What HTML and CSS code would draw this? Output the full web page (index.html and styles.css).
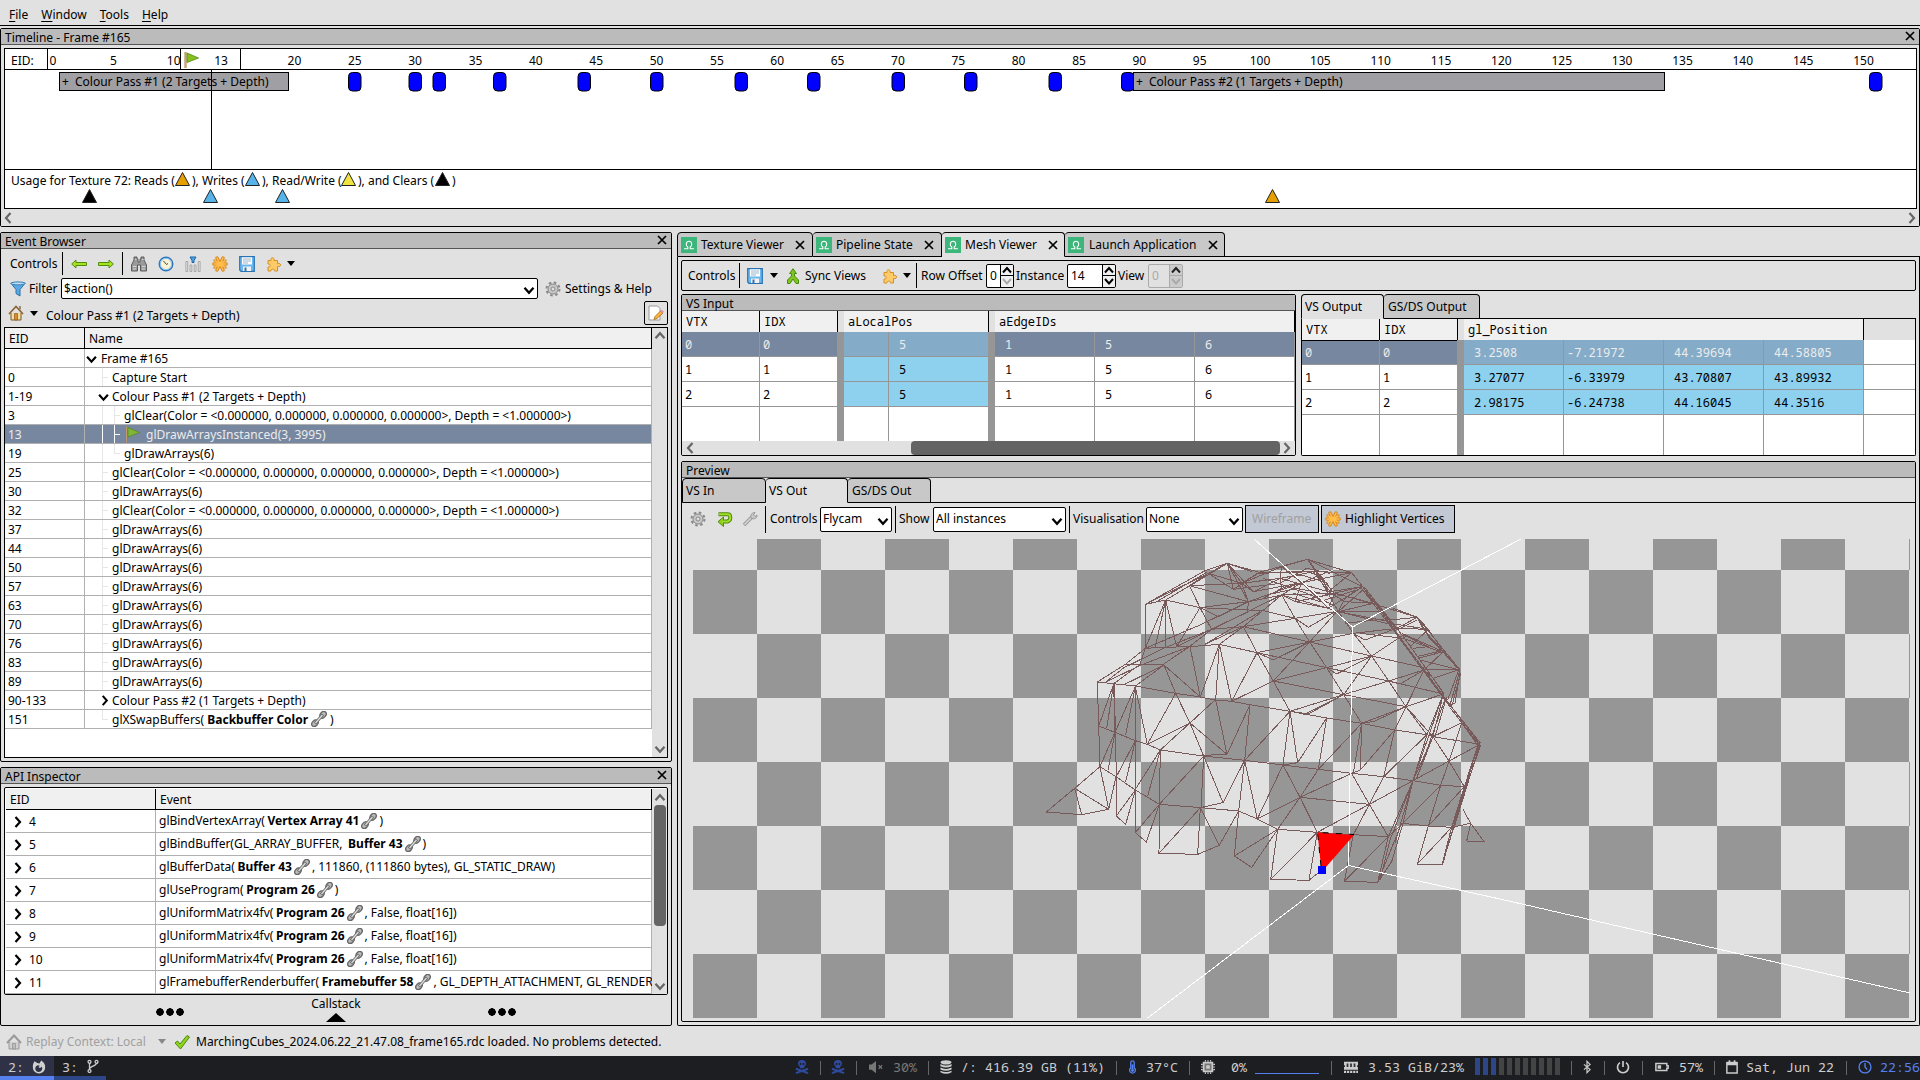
FILE: index.html
```html
<!DOCTYPE html>
<html lang="en">
<head>
<meta charset="utf-8">
<title>RenderDoc</title>
<link rel="stylesheet" href="styles.css">
</head>
<body>
<svg class="defs" width="0" height="0" aria-hidden="true">
  <symbol id="chev-d" viewBox="0 0 10 8"><path d="M1 1.5 5 6 9 1.5" fill="none" stroke="currentColor" stroke-width="2"/></symbol>
  <symbol id="chev-u" viewBox="0 0 10 8"><path d="M1 6.5 5 2 9 6.5" fill="none" stroke="currentColor" stroke-width="2"/></symbol>
  <symbol id="chev-r" viewBox="0 0 8 12"><path d="M1.5 1 6 6 1.5 11" fill="none" stroke="currentColor" stroke-width="2.2"/></symbol>
  <symbol id="chev-l" viewBox="0 0 8 12"><path d="M6.500 1 2 6 6.500 11" fill="none" stroke="currentColor" stroke-width="2.2"/></symbol>
  <symbol id="x" viewBox="0 0 10 10"><path d="M1 1 9 9M9 1 1 9" fill="none" stroke="#000" stroke-width="1.7"/></symbol>
  <symbol id="left" viewBox="0 0 16 16"><path d="M.7 8 5 4V6.500H15.500V9.500H5V12Z" fill="#a8e020" stroke="#4f8f0a"/></symbol>
  <symbol id="right" viewBox="0 0 16 16"><path d="M15.300 8 11 4V6.500H.5V9.500H11V12Z" fill="#a8e020" stroke="#4f8f0a"/></symbol>
  <symbol id="find" viewBox="0 0 16 16"><path d="M3 1h3v2h1v3h2V3h1V1h3v3l2.500 5v6H9.500V9h-3v6H.5V9L3 4Z" fill="#9a9a9a" stroke="#5c5c5c"/><path d="M2 10.500h3.500M11 10.500h3.500M4 3.500h1.500M11 3.500h1.500M2 13h3M11 13h3" stroke="#d8d8d8"/></symbol>
  <symbol id="time" viewBox="0 0 16 16"><circle cx="8" cy="8" r="6.800" fill="#f8f3d4" stroke="#2f76c0" stroke-width="1.400"/><circle cx="8" cy="8" r="5.600" fill="none" stroke="#8cc0ee"/><path d="M5.500 5 8.500 8.500 10 7.500" fill="none" stroke="#444"/></symbol>
  <symbol id="stats" viewBox="0 0 16 16"><path d="M.9 15.500V5.500h1.800v10ZM5 15.500V9h1.800v6.500ZM9.200 15.500V9H11v6.500ZM13.300 15.500V5.500h1.800v10Z" fill="#e8e8e8" stroke="#999" stroke-width=".8"/><path d="M5 1h6L9 4.500V6.500H7V4.500Z" fill="#4aa3e8" stroke="#1e66a8"/></symbol>
  <symbol id="star" viewBox="0 0 16 16"><g stroke-linecap="round"><path d="M5 2 11 14M11 2 5 14M1.800 8H14.200" stroke="#d98a22" stroke-width="3.400"/><path d="M2.500 4.500 13.500 11.500M13.500 4.500 2.500 11.500" stroke="#d98a22" stroke-width="2.400"/><path d="M5 2 11 14M11 2 5 14M2 8H14M3 5 13 11M13 5 3 11" stroke="#ffbe4c" stroke-width="1.500"/></g></symbol>
  <symbol id="save" viewBox="0 0 16 16"><path d="M.7.700H15.300V15.300H2L.7 14Z" fill="#6bb8ee" stroke="#2a72b4" stroke-width="1.200"/><path d="M3 1.300H13V8.500H3Z" fill="#fff"/><path d="M4 3H12M4 5H12M4 7H9" stroke="#9bb4c8"/><path d="M4 10.500H12V15H4Z" fill="#f2f2f2"/><path d="M5.500 11.500H7.500V15H5.500Z" fill="#3673aa"/></symbol>
  <symbol id="puzzle" viewBox="0 0 16 16"><path d="M2 4.500H5C4 .8 9 .8 8 4.500H11.500V7.500C15.700 6.500 15.700 11.500 11.500 10.500V15H8.500C9 12.500 4.500 12.500 5 15H2V11C5 11.500 5 7.500 2 8Z" fill="#ffcb68" stroke="#d49028"/></symbol>
  <symbol id="funnel" viewBox="0 0 16 16"><path d="M.8 2 6 8.500V12.500L10 15V8.500L15.200 2Z" fill="#5aa9e4" stroke="#2b6fa8"/><ellipse cx="8" cy="2.400" rx="7" ry="1.500" fill="#b8dcf5" stroke="#3c7fb5"/></symbol>
  <symbol id="gear" viewBox="0 0 16 16"><circle cx="8" cy="8" r="6.500" fill="none" stroke="#8a8a8a" stroke-width="2" stroke-dasharray="2.600 2.500"/><circle cx="8" cy="8" r="5" fill="#c8c8c8" stroke="#8a8a8a"/><circle cx="8" cy="8" r="2" fill="#e0e0e0" stroke="#8a8a8a"/></symbol>
  <symbol id="house" viewBox="0 0 16 16"><path d="M3 8V15H13V8" fill="#f4dca0" stroke="#7a5a2a"/><path d="M6.500 15V8.500H9.500V15Z" fill="#d68b2a" stroke="#80501a" stroke-width=".6"/><path d="M1 9 8 1.500 15 9" fill="none" stroke="#8a6234" stroke-width="1.600"/><path d="M12 1V4.500" stroke="#9a8a74" stroke-width="2"/></symbol>
  <symbol id="house-g" viewBox="0 0 16 16"><path d="M3 8V15H13V8" fill="#d0d0d0" stroke="#999"/><path d="M6.500 15V9.500H9.500V15Z" fill="#bbb" stroke="#888" stroke-width=".6"/><path d="M1 9 8 1.500 15 9" fill="none" stroke="#999" stroke-width="2"/></symbol>
  <symbol id="edit" viewBox="0 0 16 16"><path d="M1 1H9.500L12 3.500V15H1Z" fill="#fff" stroke="#999"/><path d="M6 14.500 7 11.500 12.500 6 15 8 9 13.500Z" fill="#ffb13b" stroke="#a56a1a" stroke-width=".8"/><path d="M12.500 6 14 4.700 15.700 6.500 15 8Z" fill="#e08ac8"/></symbol>
  <symbol id="flag" viewBox="0 0 16 16"><path d="M2.500 0V16" stroke="#a87838" stroke-width="2"/><path d="M2.500 0V16" stroke="#dcb47c" stroke-width=".7"/><path d="M4 1 15.500 6 4 10.500Z" fill="#86c01c" stroke="#4f8a10" stroke-width=".8"/></symbol>
  <symbol id="link" viewBox="0 0 16 16"><g fill="none" stroke="#666"><ellipse cx="4" cy="12.200" rx="3.700" ry="2.700" transform="rotate(-48 4 12.200)" fill="#bbb" stroke-width="1.300"/><ellipse cx="12" cy="3.800" rx="3.700" ry="2.700" transform="rotate(-48 12 3.800)" fill="#bbb" stroke-width="1.300"/><path d="M4 12.500 12 3.500" stroke-width="3"/><path d="M4.500 12 11.500 4" stroke="#ddd" stroke-width="1.300"/></g></symbol>
  <symbol id="rdoc" viewBox="0 0 16 16"><path d="M0 0H16V16H0Z" fill="#3db67b"/><path d="M3 11.800H6.800V10C4.500 9 4.800 4.200 8 4.200S11.500 9 9.200 10V11.800H13" fill="none" stroke="#fff" stroke-width="1.100"/></symbol>
  <symbol id="sync" viewBox="0 0 16 16"><path d="M8 .7 11.500 5.500H9.500V8L13.500 12V15.500H11L8 11 5 15.500H2.500V12L6.500 8V5.500H4.500Z" fill="#7ec522" stroke="#4a8a0c"/></symbol>
  <symbol id="return" viewBox="0 0 16 16"><path d="M1.500 3.300H10.500Q13.300 3.300 13.300 6.500T10.500 10.500H6" fill="none" stroke="#4f8a0a" stroke-width="4"/><path d="M6.500 6 1 10.700 6.500 15.500Z" fill="#8fd01c" stroke="#4f8a0a"/><path d="M2 3.300H10.500Q13.300 3.300 13.300 6.500T10.500 10.500H5" fill="none" stroke="#a0dc28" stroke-width="2"/></symbol>
  <symbol id="wrench" viewBox="0 0 16 16"><path d="M2 14 10 6" stroke="#999" stroke-width="3.500"/><path d="M2.500 13.500 10 6" stroke="#d5d5d5" stroke-width="1.600"/><path d="M9 7C8 4 10.500 1 13 1.500L11.500 4 13 5.500 15 4C15.500 7 12 9 9 7Z" fill="#c8c8c8" stroke="#999"/></symbol>
  <symbol id="check" viewBox="0 0 16 16"><path d="M1 9 3.500 7 6 10 13 1.500 15.500 3 6.500 15Z" fill="#8fd41c" stroke="#4c8a0a"/></symbol>
  <symbol id="skull" viewBox="0 0 16 16"><path d="M8 0C11.500 0 13 2.500 12.500 5 12.200 6.300 11 7 10.500 7.300V9.300H5.500V7.300C5 7 3.800 6.300 3.500 5 3 2.500 4.500 0 8 0Z" fill="#2f4a9c"/><circle cx="6.300" cy="4.600" r="1.200" fill="#1c1e22"/><circle cx="9.700" cy="4.600" r="1.200" fill="#1c1e22"/><path d="M1 10 15 15M15 10 1 15" stroke="#2f4a9c" stroke-width="2.200"/></symbol>
</svg>

<nav class="menubar"><span><u>F</u>ile</span><span><u>W</u>indow</span><span><u>T</u>ools</span><span><u>H</u>elp</span></nav>

<section class="dock timeline">
  <h2 class="title">Timeline - Frame #165<svg class="close"><use href="#x"/></svg></h2>
  <svg class="track" width="1913" height="161" viewBox="4 48 1913 161">
    <rect x="4.500" y="48.500" width="1912" height="160" fill="#fff" stroke="#000"/>
    <path d="M5 69.500H1916M5 169.500H1916M47.500 49V69M180.500 49V69M240.500 49V69" stroke="#000"/>
    <text x="11" y="65">EID:</text>
    <g class="ticks" transform="translate(53 65)">
      <text x="0">0</text><text x="60.400">5</text><text x="120.700">10</text><text x="168">13</text><text x="241.400">20</text><text x="301.800">25</text><text x="362.100">30</text><text x="422.500">35</text><text x="482.800">40</text><text x="543.200">45</text><text x="603.500">50</text><text x="663.900">55</text><text x="724.200">60</text><text x="784.600">65</text><text x="844.900">70</text><text x="905.300">75</text><text x="965.600">80</text><text x="1026">85</text><text x="1086.300">90</text><text x="1146.700">95</text><text x="1207">100</text><text x="1267.400">105</text><text x="1327.700">110</text><text x="1388.100">115</text><text x="1448.400">120</text><text x="1508.800">125</text><text x="1569.100">130</text><text x="1629.500">135</text><text x="1689.800">140</text><text x="1750.200">145</text><text x="1810.500">150</text>
    </g>
    <use href="#flag" x="183" y="52" width="16" height="16"/>
    <g fill="#0000fe" stroke="#000" stroke-width="1">
      <rect x="348.500" y="72.500" width="12.500" height="18.500" rx="4"/><rect x="409" y="72.500" width="12.500" height="18.500" rx="4"/><rect x="433" y="72.500" width="12.500" height="18.500" rx="4"/><rect x="493.500" y="72.500" width="12.500" height="18.500" rx="4"/><rect x="578" y="72.500" width="12.500" height="18.500" rx="4"/><rect x="650.500" y="72.500" width="12.500" height="18.500" rx="4"/><rect x="735" y="72.500" width="12.500" height="18.500" rx="4"/><rect x="807.500" y="72.500" width="12.500" height="18.500" rx="4"/><rect x="892" y="72.500" width="12.500" height="18.500" rx="4"/><rect x="964.500" y="72.500" width="12.500" height="18.500" rx="4"/><rect x="1049" y="72.500" width="12.500" height="18.500" rx="4"/><rect x="1121.500" y="72.500" width="12.500" height="18.500" rx="4"/><rect x="1869.500" y="72.500" width="12.500" height="18.500" rx="4"/>
    </g>
    <g fill="#a09fa4" stroke="#000"><rect x="59.500" y="72.500" width="229" height="18"/><rect x="1133.500" y="72.500" width="531" height="18"/></g>
    <text x="62" y="86">+</text><text x="75" y="86">Colour Pass #1 (2 Targets + Depth)</text>
    <text x="1136" y="86">+</text><text x="1149" y="86">Colour Pass #2 (1 Targets + Depth)</text>
    <path d="M211.500 70V169" stroke="#000"/>
    <text x="11" y="185">Usage for Texture 72: Reads (</text><text x="192" y="185">), Writes (</text><text x="262" y="185">), Read/Write (</text><text x="358" y="185">), and Clears (</text><text x="452" y="185">)</text>
    <g stroke="#222" stroke-width="1">
      <path d="M175.500 185.500 182.500 172.500 189.500 185.500Z" fill="#e69f00"/><path d="M245.500 185.500 252.500 172.500 259.500 185.500Z" fill="#56b4e9"/><path d="M341.500 185.500 348.500 172.500 355.500 185.500Z" fill="#f0e442"/><path d="M435.500 185.500 442.500 172.500 449.500 185.500Z" fill="#000"/>
      <path d="M82.500 202.500 89.500 189.500 96.500 202.500Z" fill="#000"/><path d="M203.500 202.500 210.500 189.500 217.500 202.500Z" fill="#56b4e9"/><path d="M275.500 202.500 282.500 189.500 289.500 202.500Z" fill="#56b4e9"/><path d="M1265.500 202.500 1272.500 189.500 1279.500 202.500Z" fill="#e69f00"/>
    </g>
  </svg>
  <div class="hscroll"><svg class="cv"><use href="#chev-l"/></svg><svg class="cv"><use href="#chev-r"/></svg></div>
</section>

<main>
  <div class="leftcol">
    <section class="dock events">
      <h2 class="title">Event Browser<svg class="close"><use href="#x"/></svg></h2>
      <div class="tools evtools"><span>Controls</span><i class="sep"></i><svg class="ic"><use href="#left"/></svg><svg class="ic"><use href="#right"/></svg><i class="sep"></i><svg class="ic"><use href="#find"/></svg><svg class="ic"><use href="#time"/></svg><svg class="ic"><use href="#stats"/></svg><svg class="ic"><use href="#star"/></svg><svg class="ic"><use href="#save"/></svg><svg class="ic"><use href="#puzzle"/></svg><i class="dd"></i></div>
      <div class="filter"><svg class="ic"><use href="#funnel"/></svg><span class="flabel">Filter</span><div class="combo fcombo"><span>$action()</span><svg class="cd"><use href="#chev-d"/></svg></div><svg class="ic"><use href="#gear"/></svg><span>Settings &amp; Help</span></div>
      <div class="crumb"><svg class="ic"><use href="#house"/></svg><i class="dd"></i><span>Colour Pass #1 (2 Targets + Depth)</span><button class="editbtn"><svg class="ic"><use href="#edit"/></svg></button></div>
      <div class="frame evframe">
        <div class="evtable">
          <div class="ehead"><b>EID</b><b>Name</b></div>
          <div class="erow"><span></span><span class="l0"><svg class="tw"><use href="#chev-d"/></svg>Frame #165</span></div>
          <div class="erow"><span>0</span><span class="l1 leaf">Capture Start</span></div>
          <div class="erow"><span>1-19</span><span class="l1"><svg class="tw"><use href="#chev-d"/></svg>Colour Pass #1 (2 Targets + Depth)</span></div>
          <div class="erow"><span>3</span><span class="l2 leaf">glClear(Color = &lt;0.000000, 0.000000, 0.000000, 0.000000&gt;, Depth = &lt;1.000000&gt;)</span></div>
          <div class="erow sel"><span>13</span><span class="l2 leaf"><svg class="flag"><use href="#flag"/></svg>glDrawArraysInstanced(3, 3995)</span></div>
          <div class="erow"><span>19</span><span class="l2 leaf last">glDrawArrays(6)</span></div>
          <div class="erow"><span>25</span><span class="l1 leaf">glClear(Color = &lt;0.000000, 0.000000, 0.000000, 0.000000&gt;, Depth = &lt;1.000000&gt;)</span></div>
          <div class="erow"><span>30</span><span class="l1 leaf">glDrawArrays(6)</span></div>
          <div class="erow"><span>32</span><span class="l1 leaf">glClear(Color = &lt;0.000000, 0.000000, 0.000000, 0.000000&gt;, Depth = &lt;1.000000&gt;)</span></div>
          <div class="erow"><span>37</span><span class="l1 leaf">glDrawArrays(6)</span></div>
          <div class="erow"><span>44</span><span class="l1 leaf">glDrawArrays(6)</span></div>
          <div class="erow"><span>50</span><span class="l1 leaf">glDrawArrays(6)</span></div>
          <div class="erow"><span>57</span><span class="l1 leaf">glDrawArrays(6)</span></div>
          <div class="erow"><span>63</span><span class="l1 leaf">glDrawArrays(6)</span></div>
          <div class="erow"><span>70</span><span class="l1 leaf">glDrawArrays(6)</span></div>
          <div class="erow"><span>76</span><span class="l1 leaf">glDrawArrays(6)</span></div>
          <div class="erow"><span>83</span><span class="l1 leaf">glDrawArrays(6)</span></div>
          <div class="erow"><span>89</span><span class="l1 leaf">glDrawArrays(6)</span></div>
          <div class="erow"><span>90-133</span><span class="l1"><svg class="twr"><use href="#chev-r"/></svg>Colour Pass #2 (1 Targets + Depth)</span></div>
          <div class="erow"><span>151</span><span class="l1 leaf last">glXSwapBuffers(&nbsp;<b>Backbuffer Color</b><svg class="lk"><use href="#link"/></svg>)</span></div>
        </div>
        <div class="vscroll"><svg class="cd"><use href="#chev-u"/></svg><svg class="cd"><use href="#chev-d"/></svg></div>
      </div>
    </section>
    <section class="dock api">
      <h2 class="title">API Inspector<svg class="close"><use href="#x"/></svg></h2>
      <div class="frame apiframe">
        <div class="apitable">
          <div class="ahead"><b>EID</b><b>Event</b></div>
          <div class="arow"><span><svg><use href="#chev-r"/></svg>4</span><span>glBindVertexArray(&nbsp;<b>Vertex Array 41</b><svg class="lk"><use href="#link"/></svg>)</span></div>
          <div class="arow"><span><svg><use href="#chev-r"/></svg>5</span><span>glBindBuffer(GL_ARRAY_BUFFER, &nbsp;<b>Buffer 43</b><svg class="lk"><use href="#link"/></svg>)</span></div>
          <div class="arow"><span><svg><use href="#chev-r"/></svg>6</span><span>glBufferData(&nbsp;<b>Buffer 43</b><svg class="lk"><use href="#link"/></svg>, 111860, (111860 bytes), GL_STATIC_DRAW)</span></div>
          <div class="arow"><span><svg><use href="#chev-r"/></svg>7</span><span>glUseProgram(&nbsp;<b>Program 26</b><svg class="lk"><use href="#link"/></svg>)</span></div>
          <div class="arow"><span><svg><use href="#chev-r"/></svg>8</span><span>glUniformMatrix4fv(&nbsp;<b>Program 26</b><svg class="lk"><use href="#link"/></svg>, False, float[16])</span></div>
          <div class="arow"><span><svg><use href="#chev-r"/></svg>9</span><span>glUniformMatrix4fv(&nbsp;<b>Program 26</b><svg class="lk"><use href="#link"/></svg>, False, float[16])</span></div>
          <div class="arow"><span><svg><use href="#chev-r"/></svg>10</span><span>glUniformMatrix4fv(&nbsp;<b>Program 26</b><svg class="lk"><use href="#link"/></svg>, False, float[16])</span></div>
          <div class="arow"><span><svg><use href="#chev-r"/></svg>11</span><span>glFramebufferRenderbuffer(&nbsp;<b>Framebuffer 58</b><svg class="lk"><use href="#link"/></svg>, GL_DEPTH_ATTACHMENT, GL_RENDER</span></div>
        </div>
        <div class="vscroll"><svg class="cd"><use href="#chev-u"/></svg><i class="thumb"></i><svg class="cd"><use href="#chev-d"/></svg></div>
      </div>
      <div class="callstack"><i class="dots"></i><div><span>Callstack</span><i class="up"></i></div><i class="dots"></i></div>
    </section>
  </div>

  <div class="rightcol">
    <div class="tabs maintabs">
      <div class="tab t1"><svg class="ic"><use href="#rdoc"/></svg><span>Texture Viewer</span><svg class="tx"><use href="#x"/></svg></div>
      <div class="tab t2"><svg class="ic"><use href="#rdoc"/></svg><span>Pipeline State</span><svg class="tx"><use href="#x"/></svg></div>
      <div class="tab t3 on"><svg class="ic"><use href="#rdoc"/></svg><span>Mesh Viewer</span><svg class="tx"><use href="#x"/></svg></div>
      <div class="tab t4"><svg class="ic"><use href="#rdoc"/></svg><span>Launch Application</span><svg class="tx"><use href="#x"/></svg></div>
      <div class="fill"></div>
    </div>
    <div class="mesh">
      <div class="frame tools meshtools"><span class="w1">Controls</span><i class="sep"></i><svg class="ic m1"><use href="#save"/></svg><i class="dd m2"></i><svg class="ic m3"><use href="#sync"/></svg><span class="m4">Sync Views</span><svg class="ic"><use href="#puzzle"/></svg><i class="dd m5"></i><i class="sep m6"></i><span class="m7">Row Offset</span>
        <div class="spin s1"><span>0</span><div><svg><use href="#chev-u"/></svg><svg class="dim"><use href="#chev-d"/></svg></div></div><span class="m8">Instance</span>
        <div class="spin s2"><span>14</span><div><svg><use href="#chev-u"/></svg><svg><use href="#chev-d"/></svg></div></div><span class="m9">View</span>
        <div class="spin s3"><span>0</span><div><svg><use href="#chev-u"/></svg><svg class="dim"><use href="#chev-d"/></svg></div></div>
      </div>
      <div class="split">
        <section class="dock vsin">
          <h2 class="title">VS Input</h2>
          <div class="g gin head"><b>VTX</b><b>IDX</b><i></i><b class="span2">aLocalPos</b><i></i><b class="span3">aEdgeIDs</b></div>
          <div class="g gin sel"><span>0</span><span>0</span><i></i><span class="c"></span><span class="c n">5</span><i></i><span class="n">1</span><span class="n">5</span><span class="n">6</span></div>
          <div class="g gin"><span>1</span><span>1</span><i></i><span class="c"></span><span class="c n">5</span><i></i><span class="n">1</span><span class="n">5</span><span class="n">6</span></div>
          <div class="g gin"><span>2</span><span>2</span><i></i><span class="c"></span><span class="c n">5</span><i></i><span class="n">1</span><span class="n">5</span><span class="n">6</span></div>
          <div class="g gin rest"><span></span><span></span><i></i><span></span><span></span><i></i><span></span><span></span><span></span></div>
          <div class="hscroll"><svg class="cv"><use href="#chev-l"/></svg><i class="thumb"></i><svg class="cv"><use href="#chev-r"/></svg></div>
        </section>
        <section class="vsout">
          <div class="tabs"><div class="tab o1 on">VS Output</div><div class="tab o2">GS/DS Output</div><div class="fill"></div></div>
          <div class="body">
            <div class="g gout head"><b>VTX</b><b>IDX</b><i></i><b class="span4">gl_Position</b><em></em></div>
            <div class="g gout sel"><span>0</span><span>0</span><i></i><span class="c p">3.2508</span><span class="c">-7.21972</span><span class="c p">44.39694</span><span class="c p">44.58805</span><em></em></div>
            <div class="g gout"><span>1</span><span>1</span><i></i><span class="c p">3.27077</span><span class="c">-6.33979</span><span class="c p">43.70807</span><span class="c p">43.89932</span><em></em></div>
            <div class="g gout"><span>2</span><span>2</span><i></i><span class="c p">2.98175</span><span class="c">-6.24738</span><span class="c p">44.16045</span><span class="c p">44.3516</span><em></em></div>
            <div class="g gout rest"><span></span><span></span><i></i><span></span><span></span><span></span><span></span><em></em></div>
          </div>
        </section>
      </div>
      <section class="dock preview">
        <h2 class="title">Preview</h2>
        <div class="tabs"><div class="tab p1">VS In</div><div class="tab p2 on">VS Out</div><div class="tab p3">GS/DS Out</div><div class="fill"></div></div>
        <div class="tools ptools"><svg class="ic"><use href="#gear"/></svg><svg class="ic q1"><use href="#return"/></svg><svg class="ic q2"><use href="#wrench"/></svg><i class="sep"></i><span class="q3">Controls</span><div class="combo k1"><span>Flycam</span><svg class="cd"><use href="#chev-d"/></svg></div><i class="sep"></i><span class="q4">Show</span><div class="combo k2"><span>All instances</span><svg class="cd"><use href="#chev-d"/></svg></div><i class="sep"></i><span class="q5">Visualisation</span><div class="combo k3"><span>None</span><svg class="cd"><use href="#chev-d"/></svg></div><div class="btn off b1">Wireframe</div><div class="btn b2"><svg class="ic"><use href="#star"/></svg>Highlight Vertices</div></div>
        <svg class="canvas" width="1217" height="479" viewBox="693 539 1217 479">
          <defs><pattern id="chk" x="693" y="506" width="128" height="128" patternUnits="userSpaceOnUse"><rect width="128" height="128" fill="#e1e1e1"/><path d="M64 0h64v64H64ZM0 64h64v64H0Z" fill="#969696"/></pattern></defs>
          <rect x="693" y="539" width="1217" height="479" fill="url(#chk)"/>
          <g class="wire" transform="translate(1020 540) scale(.33333)">
            <path d="M79,816 164,745 240,680M79,816 185,824 266,808M164,745 185,824M164,745 266,808M240,680 266,808M232,428 240,680 288,710 346,750 418,793M236,558 285,577 346,602 382,613 421,630M232,426 346,438 467,460 541,471 585,480 635,484 690,494 810,514 920,534 1025,550 1124,570 1221,584 1239,590 1380,613"/>
            <path d="M232,426 316,373 376,325M258,425 312,383 430,325M260,425 363,375 508,320M280,432 360,373 376,325M316,432 432,375 346,438M316,373 430,373 508,320M376,325 430,322 508,320 598,313 711,338M283,432 289,710 289,828 317,853 346,750M281,432 236,558M281,432 260,565M281,432 285,577M346,440 285,577M346,440 317,585M346,440 346,878 379,906 418,793M346,440 382,613M346,750 289,828M285,577 240,680M285,577 264,690M288,710 266,808M346,602 289,710M346,602 317,725M421,630 346,748M421,630 383,768M418,793 346,878M421,630 418,793 417,940 533,943 598,916 656,813M541,803 533,943M541,803 598,916M417,940 541,803"/>
            <path d="M467,460 382,613M432,375 467,460 510,549 621,643M432,375 541,471M510,320 541,471M382,613 510,549 585,480M421,630 510,549 551,648M598,313 541,471M598,313 587,480M598,313 635,484M711,338 635,484M711,338 760,423 810,514M635,484 760,423 869,306M587,480 621,643M690,494 621,643M690,494 674,661M810,514 674,661M810,514 789,675M810,514 833,668M920,534 833,668M920,534 895,688M1025,550 895,688M1025,550 1000,700M1025,550 1021,690M1124,570 1021,690M1124,570 1091,710M1221,584 1091,710M1221,584 1179,722M1239,590 1179,722M1239,590 1190,715"/>
            <path d="M421,630 551,648 674,661 789,675 895,688 995,700 1091,710 1179,722 1262,736 1333,740M551,646 621,643M789,675 833,668M995,700 1021,690M551,648 543,803M551,648 418,793M551,648 609,788M674,661 609,788M674,661 656,813M674,661 712,837M789,675 712,837M789,675 840,772M895,688 840,772M995,700 840,772M995,700 1048,793M1091,710 1048,793M1179,722 1048,793M1179,722 1149,850M1262,736 1149,850M1262,736 1225,858M1333,740 1225,858M1333,740 1295,862M1333,740 1287,663 1239,590M1262,736 1287,663 1325,548M1287,663 1179,722M1287,663 1380,613M1239,590 1325,548"/>
            <path d="M418,793 543,803 656,813M541,803 609,788M656,813 712,837 773,868 892,877 1000,884 1105,890M840,772 712,837M840,772 773,868M840,772 892,877M840,772 1048,793M1048,793 892,877M1048,793 1000,884M1048,793 1105,890 1179,722M1105,890 1149,850M656,813 643,948 695,982 773,868M643,948 773,868 752,1018 867,1021 892,877M752,1018 892,877M867,1021 905,990M1000,884 973,1024 1073,1027 1145,850M973,1024 1105,890 1073,1027M1149,850 1225,858 1295,862 1352,850 1393,906 1340,903 1352,850M1225,858 1192,972 1266,975M1192,972 1295,862 1266,975M1328,806 1352,850M1179,722 1110,900 1080,1020M1270,462 1179,722 1125,910M1149,850 1115,965 1073,1027"/>
            <path d="M1380,613 1266,975M1376,613 1290,880 1270,970M1378,618 1300,870M1382,615 1318,800 1286,910M1372,620 1330,750M1374,616 1296,880M1290,495 1380,613M1292,505 1376,613M1298,505 1382,610M1325,548 1376,620M1028,140 1290,495M1032,140 1150,290 1270,458M1025,145 1120,270 1290,500M1040,150 1110,245M1060,180 1130,270"/>
            <path d="M1270,462 1239,590M1270,462 1221,584M1276,475 1190,715M1280,470 1245,590M1320,390 1290,495M1320,400 1305,490 1290,495M1318,385 1283,480M1322,400 1295,500M711,338 760,360 869,306M711,338 920,383 1106,423 1270,462M869,306 920,383 971,464 1025,550M760,423 920,383M760,423 971,464 1158,500 1239,590M920,383 1055,348 1220,385M869,306 1055,348 1106,423 1158,500 1221,584M810,514 971,464 1106,423M850,524 971,464M810,514 865,522 971,464M1025,550 1158,500M1030,548 1060,545 1158,500M1158,500 1270,462M1158,500 1124,570M1055,348 971,464M1055,348 1000,280M1055,348 1150,285M920,383 950,402 1055,348M1106,423 1212,390M1106,423 1140,432 1212,390 1158,500M1212,390 1270,335M1240,415 1320,388M1212,390 1240,415 1270,462M1195,355 1270,335M711,338 869,306"/>
            <path d="M869,306 825,235 670,260 711,338M670,260 575,268 540,203M575,268 470,320M540,203 470,320M540,203 508,137M540,203 685,185M508,137 685,185M508,137 665,130M540,203 595,230 685,185M825,235 945,215M825,235 865,262 945,215M825,235 785,165 670,260M869,306 950,215M575,268 785,165M575,268 685,215M730,212 825,235M540,203 730,212M670,260 869,306 1000,280M555,313 670,260M555,313 720,215M598,313 670,260M430,325 575,268M376,325 540,255 685,185M508,320 575,268"/>
            <path d="M376,193 376,325M376,193 437,180 540,203M437,180 376,325M437,180 405,325M437,180 436,325M437,180 470,320M376,193 555,92 622,70M376,193 565,100 622,70M415,182 560,97M437,180 510,137 622,70M437,180 622,70M508,137 565,100M622,70 640,148 718,97 622,70M622,70 665,130M622,70 700,155M622,70 685,185M622,70 695,95M565,100 665,130 718,97 862,58M665,130 785,80 862,58M665,130 780,115 880,95M565,100 640,148M640,148 780,130M665,130 715,100 880,95M685,185 665,130M685,185 785,165 845,128M685,185 683,215 785,165M700,155 845,128M665,130 700,155 780,115M685,185 845,128 925,95"/>
            <path d="M862,58 995,98 1028,140M862,58 785,80 780,115 785,145 845,128M785,80 845,128 995,98M720,97 880,95 995,98M862,58 930,155 1028,140M862,58 950,170M870,65 955,215M880,95 925,155M862,58 1028,140M785,165 940,160 1028,140M785,165 925,205M780,115 925,155M785,165 825,185 845,128M845,128 925,205 945,160M825,185 945,160 1060,190M825,185 925,205 1028,140M925,155 995,98M945,160 1055,190M955,215 1060,190 1028,140M955,215 1090,215M955,215 1000,280M955,215 975,175 1028,140M925,205 955,215 1028,150M745,120 845,105 925,130M730,115 860,160 940,195M780,130 860,85 930,100M740,165 830,145 930,165M820,160 900,185 1010,150M830,185 900,170 950,160M860,95 905,110 925,155 975,185 1060,190M785,145 720,180"/>
            <path d="M1060,190 955,215 1110,245 1130,265M1000,280 1130,265M955,215 1120,255M975,250 1110,235M1120,205 1192,232 1320,390M1055,190 1192,232M1110,240 1192,232M1192,232 1130,265 1225,268 1192,232M1192,232 1210,268 1270,335M1130,270 1192,240M1110,250 1225,268 1270,335 1320,390M1198,240 1225,290 1315,385M1145,280 1270,335M1150,295 1275,340 1312,385M1000,280 1035,300 1130,265M1020,280 1150,295M1150,285 1225,320 1180,325M1170,320 1225,268M1190,350 1275,330M1200,360 1320,390 1212,390"/>
          </g>
          <path class="axes" d="M1254 539 1352.500 627 1521 539M1352.500 627 1348.500 865.500 1147.500 1018M1348.500 865.500 1500 899 1910 993"/>
          <path d="M1317.500 832.500 1354 835 1326 867H1321Z" fill="#f00"/><path d="M1321 866 1317.500 832.500 1354 834.500" fill="none" stroke="#000" stroke-dasharray="6 7"/>
          <rect x="1318" y="866" width="8" height="8" fill="#00f"/>
        </svg>
      </section>
    </div>
  </div>
</main>

<footer class="status"><svg class="ic"><use href="#house-g"/></svg><span class="ctx">Replay Context: Local</span><i class="dd"></i><svg class="ic"><use href="#check"/></svg><span>MarchingCubes_2024.06.22_21.47.08_frame165.rdc loaded. No problems detected.</span></footer>

<footer class="taskbar">
  <div class="ws w-a">2:<svg viewBox="0 0 16 16"><path fill-rule="evenodd" d="M3 2 6 4 8.500 4.500 10.500 1C14 3 15.300 6 15 9A7 7 0 0 1 1 9C.8 6 1.500 4 3 2ZM6.500 6.500A4 4 0 1 0 11 8C10.500 10 8 10 7.500 8.500L9 7Z" fill="#d0d0d0"/></svg></div>
  <div class="ws w-b">3:<svg viewBox="0 0 16 16"><path d="M4 4V12M12 4C12 8 4 7 4 11" fill="none" stroke="#ccc" stroke-width="1.500"/><g fill="#1c1e22" stroke="#ccc" stroke-width="1.500"><circle cx="4" cy="2.700" r="1.700"/><circle cx="12" cy="2.700" r="1.700"/><circle cx="4" cy="13.200" r="1.700"/></g></svg></div>
  <div class="tray">
    <div class="it i1"><svg viewBox="0 0 16 16"><use href="#skull"/></svg></div>
    <div class="it i2"><svg viewBox="0 0 16 16"><use href="#skull"/></svg></div>
    <div class="it i3 mute"><svg viewBox="0 0 16 16"><path d="M0 5H3L8 1V15L3 11H0Z" fill="#777"/><path d="M11 6 15 10M15 6 11 10" stroke="#777" stroke-width="1.300"/></svg>30%</div>
    <div class="it i4"><svg viewBox="0 0 14 16"><g fill="#ccc"><ellipse cx="7" cy="2.600" rx="6.500" ry="2.600"/><path d="M.5 4.500Q7 8 13.500 4.500V7Q7 10 .5 7ZM.5 8.700Q7 12 13.500 8.700V10.800Q7 13.700 .5 10.800ZM.5 12.300Q7 15.500 13.500 12.300V14Q7 17.500 .5 14Z"/></g></svg>/: 416.39 GB (11%)</div>
    <div class="it i5"><svg viewBox="0 0 10 16"><path d="M3 9V3a2 2 0 0 1 4 0V9a3.300 3.300 0 1 1-4 0Z" fill="none" stroke="#5580f0" stroke-width="1.500"/><path d="M5 5V12" stroke="#5580f0" stroke-width="2"/><circle cx="5" cy="12" r="1.600" fill="#5580f0"/></svg>37°C</div>
    <div class="it i6"><svg viewBox="0 0 16 16"><path d="M3 3H13V13H3Z" fill="#777" stroke="#ccc" stroke-width="2"/><path d="M6 6H10V10H6Z" fill="#ccc"/><path d="M8 0V2M8 14V16M11 0V2M11 14V16M5 0V2M5 14V16M0 5H2M14 5H16M0 8H2M14 8H16M0 11H2M14 11H16" stroke="#ccc" stroke-width="1.200"/></svg><span>0%</span><i class="graph"></i></div>
    <div class="it i7"><svg viewBox="0 0 16 16"><path d="M0 2H16V6H15V8H16V11H0V8H1V6H0Z" fill="#ccc"/><path d="M4 4V8M8 4V8M12 4V8" stroke="#333" stroke-width="2"/><path d="M0 13.500H16" stroke="#ccc" stroke-width="2.500" stroke-dasharray="2.500 1"/></svg>3.53 GiB/23%<div class="bars"><i class="f"></i><i class="f"></i><i class="f"></i><i></i><i></i><i></i><i></i><i></i><i></i><i></i><i></i></div></div>
    <div class="it i8"><svg viewBox="0 0 9 16"><path d="M1 5 8 11 4.500 14.500V1.500L8 5 1 11" fill="none" stroke="#ccc" stroke-width="1.400"/></svg></div>
    <div class="it i9"><svg viewBox="0 0 16 16"><path d="M4.500 3A6.300 6.300 0 1 0 11.500 3M8 1V8" fill="none" stroke="#ccc" stroke-width="1.900"/></svg></div>
    <div class="it i10"><svg viewBox="0 0 16 16"><path d="M1 4H13.500V6.500H15V9.500H13.500V12H1Z" fill="none" stroke="#ccc" stroke-width="1.700"/><path d="M3 6H7V10H3Z" fill="#ccc"/></svg>57%</div>
    <div class="it i11"><svg viewBox="0 0 14 16"><path d="M1 3H13V15H1Z" fill="none" stroke="#ccc" stroke-width="1.700"/><path d="M1 2H13V6H1ZM3 0H5V3H3ZM9 0H11V3H9Z" fill="#ccc"/></svg>Sat, Jun 22</div>
    <div class="it i12"><svg viewBox="0 0 16 16"><circle cx="8" cy="8" r="6.800" fill="none" stroke="#5580f0" stroke-width="1.500"/><path d="M8 3.500V8L10.500 11" fill="none" stroke="#5580f0" stroke-width="1.500"/></svg>22:56</div>
  </div>
</footer>
</body>
</html>
```
FILE: styles.css
```css
* { box-sizing: border-box; }
html, body { margin: 0; width: 1920px; height: 1080px; overflow: hidden; }
body { background: #e1e1e1; color: #000; font: 12px/16px "Noto Sans", sans-serif; display: flex; flex-direction: column; }
.defs { position: absolute; }
svg { flex: none; display: block; }
i { flex: none; font-style: normal; }
span { white-space: nowrap; }
.ic { width: 16px; height: 16px; }
.cv { width: 8px; height: 12px; color: #666; }
.cd { width: 12px; height: 9px; color: #666; }
.dd { border: 4px solid transparent; border-top: 5px solid #000; border-bottom: 0; height: 5px; width: 8px; }

.menubar { height: 26px; margin-bottom: 2px; border-bottom: 1px solid #000; display: flex; gap: 13px; padding: 7px 0 0 9px; }
.menubar u { text-underline-offset: 2px; }

.dock { border: 1px solid #000; border-radius: 2px; display: flex; flex-direction: column; }
.title { margin: 0; height: 16px; flex: none; font: inherit; line-height: 17px; background: #bbb; border-bottom: 1px solid #555; padding: 0 4px; display: flex; justify-content: space-between; }
.close { width: 10px; height: 10px; margin: 2px 0 0; }
.frame { border: 1px solid #000; background: #fff; }

.timeline { height: 199px; flex: none; margin-bottom: 5px; }
.track { margin: 3px 0 0 3px; }
.track text { font-size: 12px; }
.ticks { text-anchor: middle; }
.hscroll { display: flex; justify-content: space-between; align-items: center; padding: 0 3px; flex: 1; background: #e1e1e1; }

main { height: 794px; flex: none; display: flex; gap: 5px; }
.leftcol { width: 672px; display: flex; flex-direction: column; gap: 5px; }
.events { height: 530px; }
.api { height: 259px; }
.tools { display: flex; align-items: center; }
.sep { width: 1px; background: #000; }
.evtools { height: 29px; padding-left: 9px; gap: 11px; flex: none; }
.evtools > span { width: 44px; }
.evtools .sep { height: 23px; margin: 0 -3px; }
.evtools .dd { margin-left: -6px; }
.filter { display: flex; align-items: center; height: 21px; padding-left: 9px; flex: none; }
.flabel { width: 32px; margin-left: 3px; }
.combo { background: #fff; border: 1px solid #000; border-radius: 2px; display: flex; align-items: center; justify-content: space-between; padding: 0 2px; }
.combo .cd { color: #000; margin-top: 4px; }
.fcombo { width: 477px; height: 21px; margin-right: 7px; }
.filter .ic:nth-of-type(2) { margin-right: 4px; }
.crumb { height: 28px; display: flex; align-items: center; padding-left: 7px; flex: none; }
.crumb .dd { margin: 0 8px 0 6px; }
.crumb span { margin-top: 5px; }
.editbtn { margin-left: auto; margin-right: 3px; width: 24px; height: 24px; border: 1px solid #000; border-radius: 2px; background: #e1e1e1; padding: 3px; }
.evframe { height: 431px; margin: 0 3px; display: flex; flex: none; }
.evtable { flex: 1; min-width: 0; }
.ehead, .erow { display: flex; }
.ehead { height: 21px; background: #f0f0f0; border-bottom: 1px solid #000; border-right: 1px solid #000; }
.ehead b, .ahead b { font-weight: 400; }
.ehead b { line-height: 21px; padding-left: 4px; }
.ehead b:first-child { width: 80px; border-right: 1px solid #000; }
.erow { --guide: #e6e6e6; height: 19px; line-height: 19px; border-bottom: 1px solid #b0b0b0; border-right: 1px solid #b0b0b0; }
.erow > span:first-child { width: 80px; border-right: 1px solid #b0b0b0; padding-left: 3px; }
.erow > span:last-child { flex: 1; display: flex; }
.l0 { padding-left: 1px; }
.l1 { padding-left: 13px; }
.l2 { padding-left: 25px; background: linear-gradient(var(--guide), var(--guide)) 17px 0 / 1px 18px no-repeat; }
.tw { width: 11px; height: 9px; margin: 6px 4px 0 0; }
.l1 .tw { margin-right: 3px; }
.twr { width: 8px; height: 11px; margin: 4px 3px 0 3px; }
.leaf::before { content: ""; width: 6px; height: 18px; margin: 0 4px 0 4px; background: linear-gradient(var(--guide), var(--guide)) 0 0 / 1px 18px no-repeat, linear-gradient(var(--guide), var(--guide)) 0 9px / 6px 1px no-repeat; }
.last::before { background-size: 1px 9px, 6px 1px; }
.erow.sel { --guide: #fff; }
.flag { width: 16px; height: 17px; margin: 1px 6px 0 0; opacity: .8; }
.sel { background: #7787a0; color: #ececec; }
.lk { width: 16px; height: 16px; margin: 1px 3px 0 3px; }
.vscroll { width: 15px; background: #e1e1e1; display: flex; flex-direction: column; align-items: center; justify-content: space-between; padding: 3px 0; }
.vscroll .cd { flex: none; }
.thumb { background: #646464; border-radius: 4px; }

.apiframe { height: 208px; margin: 3px 3px 0; padding: 1px 0 0 1px; display: flex; flex: none; border-radius: 2px; }
.apitable { flex: 1; min-width: 0; overflow: hidden; }
.ahead, .arow { display: flex; }
.ahead { height: 21px; background: #f0f0f0; border-bottom: 1px solid #000; border-right: 1px solid #000; }
.ahead b { line-height: 22px; padding-left: 4px; }
.ahead b:first-child { width: 150px; border-right: 1px solid #000; }
.arow { height: 23px; border-bottom: 1px solid #b0b0b0; border-right: 1px solid #b0b0b0; line-height: 22px; }
.arow span { display: flex; }
.arow span:first-child { width: 150px; flex: none; border-right: 1px solid #b0b0b0; padding-left: 8px; line-height: 24px; }
.arow span:first-child svg { width: 8px; height: 12px; margin: 6px 7px 0 0; }
.arow span:last-child { padding-left: 3px; }
.arow b { margin-left: -.5px; }
.arow .lk { margin: 3px 2px 0 2px; }
.apiframe .vscroll { justify-content: flex-start; padding-top: 4px; }
.apiframe .thumb { width: 12px; height: 121px; margin: 3px 0 56px; }
.callstack { flex: 1; display: flex; justify-content: center; gap: 127px; }
.callstack div { display: flex; flex-direction: column; align-items: center; width: 50px; }
.callstack span { margin-top: 1px; }
.up { border: 10px solid transparent; border-bottom: 9px solid #000; border-top: 0; width: 20px; height: 9px; margin-top: 1px; }
.dots { width: 28px; height: 8px; margin-top: 13px; background: radial-gradient(circle at 4px 4px, #000 3.500px, transparent 4px) 0 0 / 10px 8px; }

.rightcol { flex: 1; display: flex; flex-direction: column; }
.tabs { display: flex; height: 25px; flex: none; }
.tab { border: 1px solid #000; border-left-width: 0; border-radius: 4px 4px 0 0; background: #c8c8c8; display: flex; align-items: center; }
.tab:first-child { border-left-width: 1px; }
.tab.on { background: #e1e1e1; border-bottom-color: transparent; }
.fill { flex: 1; border-bottom: 1px solid #000; }
.maintabs .ic { margin: 0 4px 0 3px; }
.maintabs .tab span { flex: 1; }
.tx { width: 10px; height: 10px; margin-right: 7px; }
.t1 { width: 136px; } .t2 { width: 129px; } .t3 { width: 123px; } .t4 { width: 160px; }
.t3 .tx, .t4 .tx { margin-right: 6px; }
.t4 .ic { margin-right: 5px; }
.mesh { flex: 1; border: 1px solid #000; border-top: 0; border-radius: 0 0 2px 2px; padding: 3px; display: flex; flex-direction: column; }
.meshtools { height: 31px; flex: none; margin-bottom: 3px; background: none; padding-left: 6px; border-radius: 2px; }
.w1 { width: 51px; }
.meshtools .sep { height: 25px; }
.m1 { margin-left: 7px; }
.m2 { margin: 0 7px 0 7px; }
.m4 { margin-left: 4px; width: 77px; }
.m5 { margin-left: 5px; }
.m6 { margin: 0 4px 0 5px; }
.m7 { width: 65px; } .m8 { width: 51px; margin-left: 2px; } .m9 { width: 30px; margin-left: 2px; }
.spin { height: 24px; border: 1px solid #000; border-radius: 2px; background: #fff; display: flex; align-items: center; overflow: hidden; }
.spin span { flex: 1; padding-left: 3px; }
.spin div { width: 13px; border-left: 1px solid #000; background: #f0f0f0; }
.spin svg { width: 12px; height: 11px; padding: 1px; }
.spin svg:first-child { border-bottom: 1px solid #000; }
.dim { color: #aaa; }
.s1 { width: 28px; } .s2 { width: 49px; } .s3 { width: 35px; background: #e1e1e1; border-color: #aaa; color: #aaa; }
.s3 div { background: #ccc; border-color: #aaa; }
.s3 svg:first-child { border-color: #aaa; color: #222; }

.split { display: flex; gap: 5px; height: 162px; flex: none; margin-bottom: 5px; }
.vsin, .vsout { width: 615px; }
.g { display: grid; height: 25px; flex: none; background: #fff; font: 12px/24px "Noto Sans Mono", "DejaVu Sans Mono", monospace; }
.gin { grid-template-columns: 78px 78px 6px 45px 100px 6px 100px 100px 100px; }
.gout { grid-template-columns: 78px 78px 6px 100px 100px 100px 100px 51px; }
.g span, .g em { border-right: 1px solid #969696; border-bottom: 1px solid #969696; padding: 1px 0 0 3px; line-height: 23px; }
.g em { border-right: 0; }
.g > i { background: #969696; }
.g .c { background: #8dd1ef; }
.sel .c { background: #84abc7 !important; }
.g.sel { background: #7787a0; }
.sel em { background: #fff; }
.g .n { padding-left: 10px; }
.g .p { padding-left: 10px; }
.head { height: 21px; line-height: 21px; }
.head b { font-weight: 400; background: #f0f0f0; border-right: 1px solid #000; border-bottom: 1px solid #000; padding-left: 4px; }
.head > i, .head em { background: #e1e1e1; border: 0; }
.span2 { grid-column: span 2; } .span3 { grid-column: span 3; } .span4 { grid-column: span 4; }
.rest { height: 34px; }
.rest span, .rest em { border-bottom: 0; }
.vsout .rest { height: 40px; }
.vsin .hscroll { padding: 0 4px; }
.vsin .thumb { width: 369px; height: 14px; margin-left: 214px; }
.vsout { display: flex; flex-direction: column; }
.vsout .tab, .preview .tab { padding-left: 3px; }
.vsout .tab + .tab { padding-left: 4px; }
.o1 { width: 83px; } .o2 { width: 96px; }
.body { border: 1px solid #000; border-top: 0; flex: 1; border-radius: 0 0 2px 2px; }

.preview { flex: 1; }
.p1 { width: 84px; } .p2 { width: 82px; } .p3 { width: 83px; }
.preview .p3 { padding-left: 4px; }
.ptools { height: 32px; padding-left: 8px; flex: none; }
.ptools .sep { height: 27px; }
.q1 { margin-left: 11px; } .q2 { margin: 0 7px 0 9px; }
.q3 { width: 50px; margin-left: 4px; } .q4 { width: 34px; margin-left: 3px; } .q5 { width: 73px; margin-left: 3px; }
.ptools .combo { height: 25px; }
.k1 { width: 72px; margin-right: 3px; } .k2 { width: 133px; margin-right: 3px; } .k3 { width: 97px; }
.btn { height: 28px; border: 1px solid #000; background: #c2c8d4; display: flex; align-items: center; padding-left: 6px; margin-left: 2px; }
.off { color: #a0a0a0; }
.b1 { width: 74px; } .b2 { width: 134px; padding-left: 3px; margin-left: 2px; }
.b2 .ic { margin-right: 4px; }
.canvas { margin: 4px 0 0 11px; }
.wire path { fill: none; stroke: #785a5a; stroke-width: 1; vector-effect: non-scaling-stroke; shape-rendering: crispEdges; }
.axes { fill: none; stroke: #fff; stroke-width: 1; shape-rendering: crispEdges; }

.status { height: 30px; flex: none; display: flex; align-items: center; padding: 1px 0 0 6px; }
.ctx { color: #a0a0a0; width: 132px; margin-left: 4px; }
.status .dd { border-top-color: #888; margin-right: 8px; }
.status .ic:nth-of-type(2) { margin-right: 6px; }

.taskbar { height: 24px; flex: none; background: #1c1e22; color: #ccc; font: 13.333px/20px "Noto Sans Mono", "DejaVu Sans Mono", monospace; display: flex; }
.ws { border-bottom: 4px solid #2c4688; padding: 1px 0 0 8px; display: flex; }
.ws svg { width: 14px; height: 15px; margin: 2px 0 0 8px; }
.w-a { width: 54px; background: #2f3247; border-color: #5580f0; }
.w-b { width: 52px; }
.tray { margin-left: auto; width: 1136px; display: flex; align-items: center; white-space: pre; overflow: hidden; }
.it { position: relative; flex: none; display: flex; align-items: center; padding-left: 12px; height: 24px; padding-bottom: 2px; }
.it::after { content: ""; position: absolute; right: -1px; top: 5px; width: 1px; height: 14px; background: #666; }
.it svg { height: 14px; width: 14px; margin-right: 9px; }
.i1 { width: 36px; } .i2 { width: 36px; } .i3 { width: 72px; } .i4 { width: 188px; } .i5 { width: 73px; } .i6 { width: 142px; } .i7 { width: 240px; } .i8 { width: 33px; } .i9 { width: 38px; } .i10 { width: 72px; } .i11 { width: 132px; } .i12 { width: 90px; color: #5580f0; }
.i1 svg, .i2 svg { margin-left: -1px; }
.mute { color: #777; } .mute svg { width: 16px; }
.i4 svg { width: 12px; }
.i5 svg { width: 9px; }
.i6 svg { margin-right: 16px; }
.graph { width: 64px; height: 1px; background: #5580f0; margin: 12px 0 0 8px; }
.i7 svg, .i10 svg { width: 16px; }
.bars { display: flex; gap: 3px; margin-left: 11px; }
.bars i { width: 5px; height: 17px; background: #444; margin-bottom: 1px; }
.bars .f { background: #2c4688; }
.i8 svg { width: 8px; }
.i11 svg { width: 12px; margin-right: 8px; }
.i12 svg { margin-right: 8px; }
```
